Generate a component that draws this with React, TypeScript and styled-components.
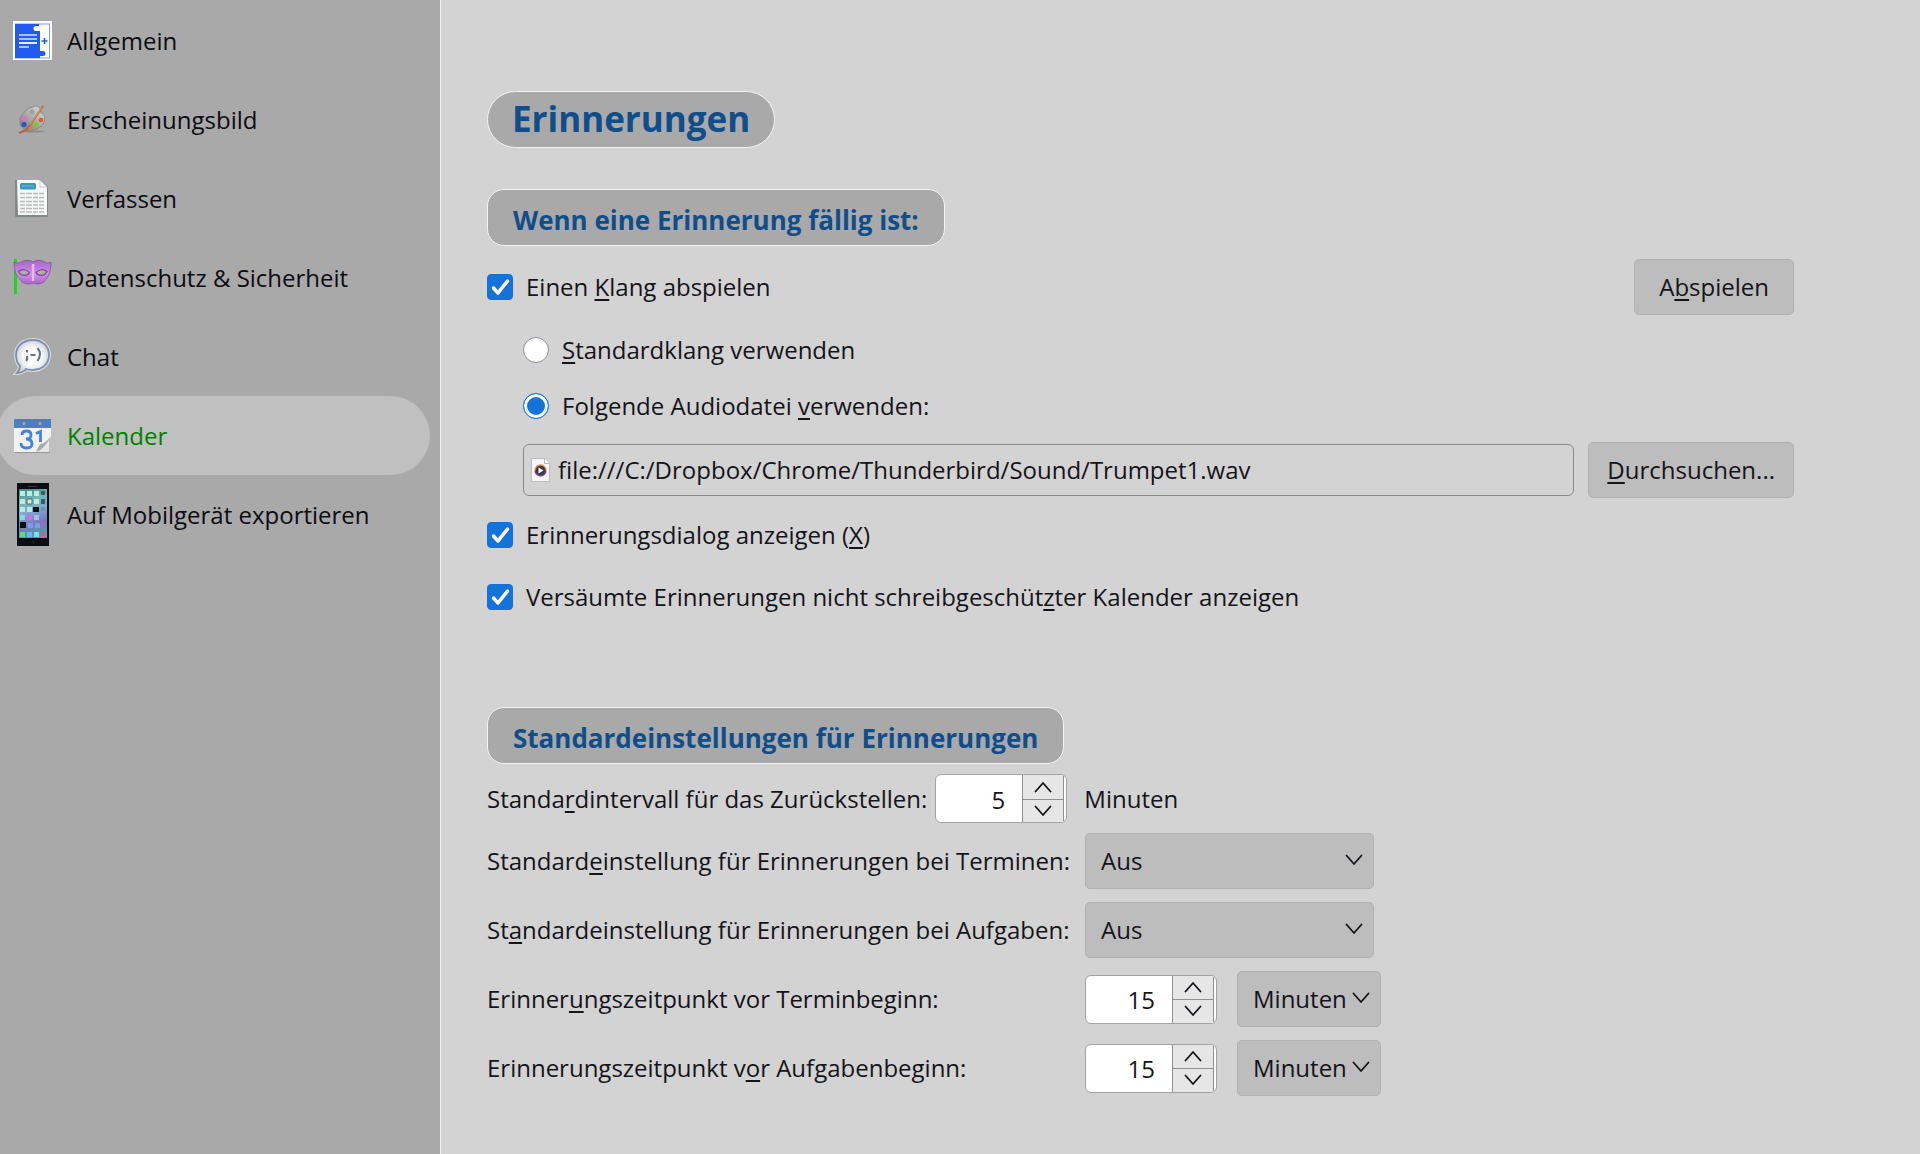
import React, { useState } from "react";
import styled, { createGlobalStyle } from "styled-components";

const GlobalStyle = createGlobalStyle`
  *, *::before, *::after { box-sizing: border-box; }
  body {
    margin: 0;
    background: #d3d3d3;
    color: #15141a;
    font: 24px/34px "Open Sans", "Noto Sans", sans-serif;
  }
  input, select, button { font: inherit; color: inherit; margin: 0; }
`;

const Page = styled.div`
  display: grid;
  grid-template-columns: 441px minmax(0, 1fr);
  min-height: 100vh;
`;

const Sidebar = styled.nav`
  background: #a9a9a9;
  border-right: 1px solid #f0f0f0;
  padding: 1px 10px 0 0;
  overflow: hidden;
`;

const Category = styled.a<{ $active?: boolean }>`
  display: flex;
  align-items: center;
  gap: 15px;
  height: 79px;
  margin-left: -4px;
  padding-left: 17px;
  border-radius: 40px;
  color: ${(p) => (p.$active ? "#008000" : "#0c0c10")};
  background: ${(p) => (p.$active ? "#c0c0c0" : "transparent")};
  text-decoration: none;
  white-space: nowrap;
`;

const IconSlot = styled.span`
  display: flex;
  flex: none;
  justify-content: center;
  width: 39px;
`;

const Main = styled.main`
  padding: 91px 126px 48px 46px;
`;

const Title = styled.h1`
  width: fit-content;
  margin: 0 0 41px;
  padding: 4px 24px 5px;
  border: 1px solid #f4f4f4;
  border-radius: 29px;
  background: #a9a9a9;
  color: #104e8b;
  font-size: 35px;
  line-height: 46px;
  font-weight: 700;
`;

const Heading = styled.h2`
  width: fit-content;
  margin: 0;
  padding: 13px 25px 8px;
  border: 1px solid #f4f4f4;
  border-radius: 17px;
  background: #a9a9a9;
  color: #104e8b;
  font-size: 26px;
  line-height: 34px;
  font-weight: 700;
`;

const Section = styled.section`
  & + & { margin-top: 93px; }
`;

const SoundRow = styled.div`
  display: flex;
  align-items: center;
  justify-content: space-between;
  margin-top: 13px;
`;

const SoundOptions = styled.div`
  display: flex;
  flex-direction: column;
  gap: 22px;
  margin: 18px 0 20px 36px;
`;

const FileRow = styled.div`
  display: flex;
  align-items: center;
  gap: 14px;
  margin-top: -3px;
`;

const DialogOptions = styled.div`
  display: flex;
  flex-direction: column;
  gap: 28px;
`;

const Choice = styled.label`
  display: flex;
  align-items: center;
  gap: 13px;
  width: fit-content;
`;

const Stack = styled.span`
  display: inline-grid;
  align-items: center;
  flex: none;
  & > * { grid-area: 1 / 1; }
  & > svg { justify-self: center; pointer-events: none; }
`;

const CheckInput = styled.input`
  appearance: none;
  width: 26px;
  height: 26px;
  border: 1px solid #8f8f9d;
  border-radius: 4px;
  background: #fff;
  &:checked { background: #1373d9; border-color: #1373d9; }
  &:not(:checked) + svg { visibility: hidden; }
`;

const RadioInput = styled.input`
  appearance: none;
  flex: none;
  width: 26px;
  height: 26px;
  border: 1px solid #8f8f9d;
  border-radius: 50%;
  background: #fff;
  &:checked {
    border: 1px solid #1373d9;
    background: #1373d9;
    box-shadow: inset 0 0 0 3px #fff;
  }
`;

const Key = styled.u`
  text-decoration-thickness: 2px;
  text-underline-offset: 3px;
  text-decoration-skip-ink: none;
`;

const Button = styled.button<{ $pad: number }>`
  height: 56px;
  padding: 0 ${(p) => p.$pad}px;
  border: 1px solid #b1b1b1;
  border-radius: 5px;
  background: #bdbdbd;
  white-space: nowrap;
`;

const FileField = styled.span`
  display: flex;
  flex: 1;
  align-items: center;
  gap: 8px;
  height: 52px;
  padding: 0 7px;
  border: 1px solid #8a8a8a;
  border-radius: 6px;
`;

const FileInput = styled.input`
  flex: 1;
  min-width: 0;
  padding: 0;
  border: 0;
  outline: 0;
  background: transparent;
`;

const IntervalRow = styled.div`
  display: flex;
  align-items: center;
  gap: 8px;
  margin: 10px 0;
`;

const Unit = styled.span`
  padding-left: 9px;
`;

const Defaults = styled.div`
  display: grid;
  grid-template-columns: minmax(583px, max-content) max-content;
  grid-auto-rows: 56px;
  align-items: center;
  gap: 13px 15px;
`;

const Fields = styled.div`
  display: flex;
  align-items: center;
  gap: 20px;
`;

const SpinBox = styled.span`
  display: inline-grid;
  grid-template-columns: 86px 42px;
  grid-template-rows: 1fr 1fr;
  width: 132px;
  height: 49px;
  border: 1px solid #a3a3a3;
  border-radius: 6px;
  background: #fff;
  overflow: hidden;
`;

const NumberInput = styled.input`
  grid-row: 1 / 3;
  min-width: 0;
  padding: 2px 17px 0 0;
  border: 0;
  outline: 0;
  background: transparent;
  text-align: right;
  appearance: textfield;
  &::-webkit-inner-spin-button { appearance: none; margin: 0; }
`;

const StepButton = styled.button`
  display: flex;
  align-items: center;
  justify-content: center;
  padding: 0;
  border: 1px solid #8f8f8f;
  border-width: 0 1px 0 1px;
  background: #e6e6e6;
  & + & { border-top-width: 1px; }
`;

const SelectBox = styled.span<{ $width: number }>`
  display: inline-grid;
  align-items: center;
  width: ${(p) => p.$width}px;
  & > * { grid-area: 1 / 1; }
  & > svg {
    justify-self: end;
    margin: 0 11px 3px 0;
    pointer-events: none;
  }
`;

const SelectInput = styled.select`
  appearance: none;
  width: 100%;
  height: 56px;
  padding: 0 15px;
  border: 1px solid #b1b1b1;
  border-radius: 5px;
  background: #bdbdbd;
`;

const Chevron = ({ up = false }: { up?: boolean }) => (
  <svg width="18" height="12" viewBox="0 0 18 12" fill="none" stroke="#15141a" strokeWidth="1.800" strokeLinecap="round" strokeLinejoin="round">
    <path d={up ? "M1.500 10.500 9 2 16.500 10.500" : "M1.500 1.500 9 10 16.500 1.500"} />
  </svg>
);

const GeneralIcon = () => (
  <svg width="39" height="39" viewBox="0 0 39 39">
    <rect width="39" height="39" fill="#fff" />
    <rect x="2.500" y="3" width="34" height="34" fill="#fff" stroke="#7d9bf5" />
    <path d="M2 3h24v2h-3a2 2 0 0 0 0 5h4v20h3a2.500 2.500 0 1 1 0 5h-3v2H2z" fill="#2259ee" />
    <g stroke="#a9c0fb" strokeWidth="1.800">
      <path d="M6 14h18M6 18h18M6 26h10" />
      <path d="M6 22h18" stroke="#fff" />
    </g>
    <path d="M31.500 17v6M28.500 20h6" stroke="#2259ee" strokeWidth="1.600" />
  </svg>
);

const PaletteIcon = () => (
  <svg width="39" height="39" viewBox="0 0 39 39">
    <defs>
      <linearGradient id="pal" x1="0" y1="1" x2="1" y2="0">
        <stop offset="0" stopColor="#7c7c7c" />
        <stop offset="1" stopColor="#dedede" />
      </linearGradient>
    </defs>
    <ellipse cx="20" cy="31.500" rx="12" ry="1" fill="#8b8b8b" />
    <path d="M19 7c6-3 9 1 9 6 4 1 4 6 3 9-3 6-9 8-13 8-6 1-11-2-11-9 0-6 6-12 12-14z" fill="url(#pal)" stroke="#7e7e7e" strokeWidth=".8" />
    <circle cx="19" cy="12" r="2" fill="#a5a5a5" stroke="#8d8d8d" strokeWidth=".6" />
    <circle cx="11.500" cy="18.500" r="2.300" fill="#e86cc4" />
    <circle cx="11" cy="24.500" r="2.500" fill="#2350dd" />
    <circle cx="28" cy="20" r="2.300" fill="#f4502a" />
    <circle cx="23" cy="24.500" r="2.500" fill="#80c62a" />
    <circle cx="17.500" cy="27.500" r="2.300" fill="#f07832" />
    <path d="M30 6 18 24 13 30 6 33" fill="none" stroke="#a86f48" strokeWidth="2" />
    <path d="M29 7 17 25" stroke="#e39a68" strokeWidth="1" />
  </svg>
);

const ComposeIcon = () => (
  <svg width="39" height="39" viewBox="0 0 39 39">
    <path d="M2 1h26l7 7v29a1 1 0 0 1-1 1H3a1 1 0 0 1-1-1z" fill="#818986" />
    <path d="M4 1h23l7 7v28H5z" fill="#f7f8f7" />
    <path d="M27 1v7h7z" fill="#fff" stroke="#b8bab9" strokeWidth=".8" />
    <rect x="7" y="4" width="16" height="6.500" rx="1.500" fill="#3a96c5" />
    <path d="M9 7h12" stroke="#7ec2e2" strokeDasharray="2 .6" />
    <path d="M7 14.500h24M7 18.500h24M7 22.500h24M7 26h24M7 29.500h24M7 33h24" stroke="#b9bbba" strokeWidth="1.500" strokeDasharray="5 1 6 1" />
  </svg>
);

const MaskIcon = () => (
  <svg width="39" height="39" viewBox="0 0 39 39">
    <defs>
      <linearGradient id="mask" x1="0" y1="0" x2="0" y2="1">
        <stop offset="0" stopColor="#a868c4" />
        <stop offset=".6" stopColor="#d08cea" />
        <stop offset="1" stopColor="#a865c6" />
      </linearGradient>
    </defs>
    <path d="M2.500 1v35" stroke="#1fd61f" strokeWidth="3" />
    <path d="M1 4c3 2 6 1 9-1 3-1 7-1 10 1 3-2 7-2 10-1 3 2 5 3 8 1 0 8-2 14-5 17-2 5-9 6-13 4-4 2-11 1-13-4C3 18 1 12 1 4z" fill="url(#mask)" stroke="#85519b" strokeWidth=".8" />
    <path d="M20 6v17" stroke="#e7b6fa" strokeWidth="2.500" />
    <path d="M5.500 13.500c3-3 8-2 11 1-1 3-8 5-11-1zM34 13.500c-3-3-8-2-11 1 1 3 8 5 11-1z" fill="#b0aab2" stroke="#80489a" strokeWidth="1.200" />
  </svg>
);

const ChatIcon = () => (
  <svg width="39" height="39" viewBox="0 0 39 39">
    <defs>
      <radialGradient id="chat">
        <stop offset=".5" stopColor="#fff" />
        <stop offset="1" stopColor="#cfd4dc" />
      </radialGradient>
    </defs>
    <path d="M20 3C10 3 3 9 3 18c0 5 2 9 4 11 0 3-1 5-3 7 4 0 8-2 9-4 15 4 23-5 23-14S29 3 20 3z" fill="url(#chat)" stroke="#d7dae0" strokeWidth="4" />
    <path d="M20 3C10 3 3 9 3 18c0 5 2 9 4 11 0 3-1 5-3 7 4 0 8-2 9-4 15 4 23-5 23-14S29 3 20 3z" fill="url(#chat)" stroke="#7d90ae" strokeWidth="1.800" />
    <g fill="none" stroke="#637087" strokeWidth="2">
      <path d="M14 13v2.500M14 19q1 3-1 5M17.500 18h5M24.500 11q5 6 0 13" />
    </g>
  </svg>
);

const CalendarIcon = () => (
  <svg width="39" height="39" viewBox="0 0 39 39">
    <path d="M1.500 35h35v2h-35z" fill="#989898" />
    <path d="M1 4h37v17L27 36H1z" fill="#f1f1f2" />
    <path d="M36 24v12H24z" fill="#e6e6e8" />
    <path d="M38 20Q27 25 23 36q8-2 15-16z" fill="#a8aaad" />
    <path d="M38 20Q30 23 28 28q4-1 10-8z" fill="#fafafa" />
    <path d="M1 3h37v9H1z" fill="#4680c6" />
    <circle cx="11" cy="7.500" r="1.600" fill="#bda989" />
    <circle cx="27" cy="7.500" r="1.600" fill="#bda989" />
    <g fill="none" stroke="#4283dc" strokeWidth="2.800">
      <path d="M9 19q0-4 4.500-4t4.500 4q0 4-5 4 6 0 6 5 0 4-5.500 4T8 27" />
      <path d="M23 17.500l4.500-2V26" />
    </g>
  </svg>
);

const PhoneIcon = () => (
  <svg width="32" height="63" viewBox="0 0 32 63">
    <defs>
      <linearGradient id="phone" x1="0" y1="0" x2=".2" y2="1">
        <stop offset="0" stopColor="#3c8582" />
        <stop offset=".3" stopColor="#75b6b0" />
        <stop offset=".5" stopColor="#82a9d4" />
        <stop offset=".8" stopColor="#7779ba" />
        <stop offset="1" stopColor="#4e9bb4" />
      </linearGradient>
    </defs>
    <rect width="32" height="63" fill="#0a0d12" />
    <path d="M11 3.500h9" stroke="#31353a" />
    <rect x="2" y="6" width="28" height="49" fill="url(#phone)" />
    <g fill="#b9ece0">
      <path d="M3 8h5v5H3zM10 8h5v5h-5zM17 8h5v5h-5zM3 16h5v5H3zM17 16h5v5h-5zM3 24h5v5H3zM10 24h5v5h-5z" />
    </g>
    <path d="M24 8h4v4h-4zM24 16h4v5h-4z" fill="#306266" />
    <path d="M10 16h5v5h-5z" fill="#dce8e4" stroke="#49706e" />
    <path d="M16 24h6v5h-6zM3 39h6v6H3z" fill="#081016" />
    <path d="M24 24h4v4h-4z" fill="#52a3a5" />
    <path d="M10 32h5v5h-5z" fill="#cc72dc" />
    <path d="M17 32h5v5h-5z" fill="#a8b7ec" />
    <path d="M3 32h5v5H3z" fill="#8ad9d7" />
    <path d="M11 40h5v5h-5zM18 40h5v5h-5z" fill="#7d9be8" />
    <path d="M24 39h4v5h-4z" fill="#a868be" />
    <path d="M3 49h5v5H3z" fill="#62d878" />
    <path d="M10 49h5v5h-5z" fill="#69b8ea" />
    <path d="M17 49h5v5h-5z" fill="#7ce0d6" />
    <path d="M24 49h4v5h-4z" fill="#d4627c" />
    <circle cx="16" cy="59" r="1.800" fill="#15191e" />
  </svg>
);

const AudioFileIcon = () => (
  <svg width="19" height="24" viewBox="0 0 19 24">
    <path d="M.5.500h13l5 5v18H.500z" fill="#f6f6f8" stroke="#bcbcc0" />
    <path d="M13.500.500v5h5" fill="#fff" stroke="#b4b4b8" />
    <circle cx="9.500" cy="12.500" r="5.500" fill="#3a3a42" />
    <path d="M4 12.500a5.500 5.500 0 0 1 11 0" fill="none" stroke="#e08a4a" strokeWidth="1.300" />
    <path d="M4 12.500a5.500 5.500 0 0 0 11 0" fill="none" stroke="#7c4a9c" strokeWidth="1.300" />
    <path d="M7.500 9.500v6l5-3z" fill="#fff" />
  </svg>
);

const categories = [
  { label: "Allgemein", Icon: GeneralIcon },
  { label: "Erscheinungsbild", Icon: PaletteIcon },
  { label: "Verfassen", Icon: ComposeIcon },
  { label: "Datenschutz & Sicherheit", Icon: MaskIcon },
  { label: "Chat", Icon: ChatIcon },
  { label: "Kalender", Icon: CalendarIcon },
  { label: "Auf Mobilgerät exportieren", Icon: PhoneIcon },
];

// Marks the access key of a label: "Einen _Klang" underlines the K.
const Keyed = ({ text }: { text: string }) => {
  const at = text.indexOf("_");
  return (
    <span>
      {text.slice(0, at)}
      <Key>{text[at + 1]}</Key>
      {text.slice(at + 2)}
    </span>
  );
};

const Check = ({ text }: { text: string }) => (
  <Choice>
    <Stack>
      <CheckInput type="checkbox" defaultChecked />
      <svg width="26" height="26" viewBox="0 0 26 26" fill="none" stroke="#fff" strokeWidth="3.500" strokeLinecap="round" strokeLinejoin="round">
        <path d="M6.500 14l4.500 5 9.500-12" />
      </svg>
    </Stack>
    <Keyed text={text} />
  </Choice>
);

const Spinner = ({ id, initial }: { id: string; initial: number }) => {
  const [value, setValue] = useState(initial);
  return (
    <SpinBox>
      <NumberInput id={id} type="number" min={0} value={value} onChange={(e) => setValue(Number(e.target.value))} />
      <StepButton type="button" aria-label="+" onClick={() => setValue(value + 1)}>
        <Chevron up />
      </StepButton>
      <StepButton type="button" aria-label="−" onClick={() => setValue(Math.max(0, value - 1))}>
        <Chevron />
      </StepButton>
    </SpinBox>
  );
};

const Select = ({ id, label, option, width }: { id?: string; label?: string; option: string; width: number }) => (
  <SelectBox $width={width}>
    <SelectInput id={id} aria-label={label}>
      <option>{option}</option>
    </SelectInput>
    <Chevron />
  </SelectBox>
);

export default function App() {
  return (
    <>
      <GlobalStyle />
      <Page>
        <Sidebar>
          {categories.map(({ label, Icon }) => (
            <Category key={label} href="#" $active={label === "Kalender"}>
              <IconSlot>
                <Icon />
              </IconSlot>
              {label}
            </Category>
          ))}
        </Sidebar>
        <Main>
          <Title>Erinnerungen</Title>
          <Section>
            <Heading>Wenn eine Erinnerung fällig ist:</Heading>
            <SoundRow>
              <Check text="Einen _Klang abspielen" />
              <Button type="button" $pad={24}>
                <Keyed text="A_bspielen" />
              </Button>
            </SoundRow>
            <SoundOptions>
              <Choice>
                <RadioInput type="radio" name="sound" />
                <Keyed text="_Standardklang verwenden" />
              </Choice>
              <Choice>
                <RadioInput type="radio" name="sound" defaultChecked />
                <Keyed text="Folgende Audiodatei _verwenden:" />
              </Choice>
              <FileRow>
                <FileField>
                  <AudioFileIcon />
                  <FileInput type="text" aria-label="Audiodatei" defaultValue="file:///C:/Dropbox/Chrome/Thunderbird/Sound/Trumpet1.wav" />
                </FileField>
                <Button type="button" $pad={18}>
                  <Keyed text="_Durchsuchen..." />
                </Button>
              </FileRow>
            </SoundOptions>
            <DialogOptions>
              <Check text="Erinnerungsdialog anzeigen (_X)" />
              <Check text="Versäumte Erinnerungen nicht schreibgeschüt_zter Kalender anzeigen" />
            </DialogOptions>
          </Section>
          <Section>
            <Heading>Standardeinstellungen für Erinnerungen</Heading>
            <IntervalRow>
              <label htmlFor="snooze">
                <Keyed text="Standa_rdintervall für das Zurückstellen:" />
              </label>
              <Spinner id="snooze" initial={5} />
              <Unit>Minuten</Unit>
            </IntervalRow>
            <Defaults>
              <label htmlFor="events">
                <Keyed text="Standard_einstellung für Erinnerungen bei Terminen:" />
              </label>
              <Select id="events" option="Aus" width={289} />
              <label htmlFor="tasks">
                <Keyed text="St_andardeinstellung für Erinnerungen bei Aufgaben:" />
              </label>
              <Select id="tasks" option="Aus" width={289} />
              <label htmlFor="event-time">
                <Keyed text="Erinner_ungszeitpunkt vor Terminbeginn:" />
              </label>
              <Fields>
                <Spinner id="event-time" initial={15} />
                <Select label="Einheit vor Terminbeginn" option="Minuten" width={144} />
              </Fields>
              <label htmlFor="task-time">
                <Keyed text="Erinnerungszeitpunkt v_or Aufgabenbeginn:" />
              </label>
              <Fields>
                <Spinner id="task-time" initial={15} />
                <Select label="Einheit vor Aufgabenbeginn" option="Minuten" width={144} />
              </Fields>
            </Defaults>
          </Section>
        </Main>
      </Page>
    </>
  );
}
